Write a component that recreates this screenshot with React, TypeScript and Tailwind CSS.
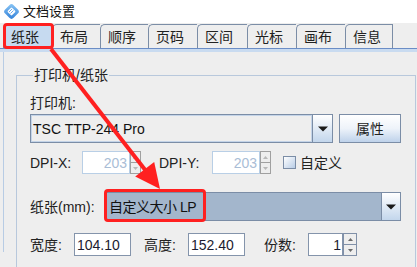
import React from "react";

const tabs: [string, number][] = [
  ["纸张", 49],
  ["布局", 48],
  ["顺序", 48],
  ["页码", 49],
  ["区间", 50],
  ["光标", 49],
  ["画布", 49],
  ["信息", 48],
];

function DownArrow() {
  return (
    <svg width="10" height="6" viewBox="0 0 10 6">
      <path d="M0 0.5 H10 L5 5.5 Z" fill="#1a1a1a" />
    </svg>
  );
}

function SpinButtons({ w, active }: { w: number; active?: boolean }) {
  const border = active ? "border-[#8090a8]" : "border-[#a0a0a0]";
  const arrow = active ? "#6a6a6a" : "#b8b8b8";
  return (
    <div className={`flex flex-col h-full border ${border} bg-[#eeeeee]`} style={{ width: w }}>
      <div className={`flex-1 flex items-center justify-center border-b ${border}`}>
        <svg width="5" height="3" viewBox="0 0 5 3">
          <path d="M0 3 L2.5 0 L5 3 Z" fill={arrow} />
        </svg>
      </div>
      <div className="flex-1 flex items-center justify-center">
        <svg width="5" height="3" viewBox="0 0 5 3">
          <path d="M0 0 L2.5 3 L5 0 Z" fill={arrow} />
        </svg>
      </div>
    </div>
  );
}

function DisabledSpinner() {
  return (
    <div className="flex h-[23px] w-[59px]">
      <div className="w-[48px] h-full bg-white border border-[#b9cfe6] flex items-center justify-end pr-[2px] text-[14px] text-[#a9bdd6]">
        203
      </div>
      <SpinButtons w={11} />
    </div>
  );
}

function TextField({ value, w }: { value: string; w: number }) {
  return (
    <div
      className="h-[23px] bg-white border border-[#8494ab] flex items-center pl-[2px] text-[14px] text-[#1c1c30]"
      style={{ width: w }}
    >
      {value}
    </div>
  );
}

export default function App() {
  return (
    <div className="relative w-[417px] h-[267px] overflow-hidden bg-[#eeeeee] text-[#222222] font-['Liberation_Sans','Noto_Sans_CJK_SC',sans-serif] leading-[16px]">
      {/* Title bar */}
      <div className="h-[23px] bg-white flex items-center pl-[3px]">
        <svg width="17" height="17" viewBox="0 0 17 17">
          <defs>
            <linearGradient id="ig" x1="0" y1="0" x2="1" y2="1">
              <stop offset="0" stopColor="#8ec8f6" />
              <stop offset="1" stopColor="#2f7fd8" />
            </linearGradient>
          </defs>
          <rect x="2.5" y="2.5" width="12" height="12" rx="3" transform="rotate(45 8.5 8.5)" fill="url(#ig)" />
          <rect x="5.5" y="5.5" width="6" height="6" rx="1" transform="rotate(45 8.5 8.5)" fill="#ffffff" />
          <path d="M6 9 L9 6 M7.5 10.5 L10.5 7.5" stroke="#5aa0e8" strokeWidth="0.9" />
        </svg>
        <span className="ml-[3px] text-[13px] text-[#111111]">文档设置</span>
      </div>

      {/* Tabs */}
      <div className="h-[25px] flex items-end pl-[3px]">
        {tabs.map(([t, w], i) => (
          <div
            key={t}
            className={`h-[24px] flex items-center pl-[7px] text-[14px] border-t border-l border-[#7b8da6] rounded-tl-[5px] ${
              i === 0 ? "bg-[#c6daf0]" : "bg-[#eeeeee]"
            } ${i === tabs.length - 1 ? "border-r" : ""}`}
            style={{ width: w }}
          >
            {t}
          </div>
        ))}
      </div>
      <div className="h-px bg-[#6b8dc6]" />
      <div className="h-[3px] bg-[#c9dbf0]" />

      {/* Content */}
      <div className="ml-[3px] h-[200px] border-l border-[#b8cce4] pl-[12px] pt-[15px]">
        <fieldset className="w-[400px] h-[240px] border border-[#b8c8dc] pl-[13px]">
          <legend className="ml-[3px] px-[1px] text-[14px] leading-[16px]">打印机/纸张</legend>

          <div className="mt-[12px] text-[14px]">打印机:</div>

          {/* printer combo */}
          <div className="mt-[3px] flex h-[29px]">
            <div className="w-[283px] h-full border border-[#7b8da6] bg-[#eeeeee] shadow-[inset_0_0_0_1px_#c4d4e8] flex items-center pl-[2px] text-[14px] text-[#111111]">
              TSC TTP-244 Pro
            </div>
            <div className="w-[20px] h-full border-y border-r border-[#7b8da6] bg-gradient-to-b from-white to-[#c3d6ec] flex items-center justify-center">
              <DownArrow />
            </div>
            <div className="ml-[6px] w-[62px] h-full border border-[#7b8da6] bg-gradient-to-b from-white via-[#eef3fa] to-[#bed2ea] flex items-center justify-center text-[14px]">
              属性
            </div>
          </div>

          {/* DPI row */}
          <div className="mt-[8px] flex items-center h-[23px] text-[14px]">
            <span className="w-[52px]">DPI-X:</span>
            <DisabledSpinner />
            <span className="ml-[18px] w-[53px]">DPI-Y:</span>
            <DisabledSpinner />
            <div className="ml-[12px] w-[13px] h-[13px] border border-[#7b8da6] bg-gradient-to-br from-white to-[#b9cde6]" />
            <span className="ml-[4px]">自定义</span>
          </div>

          {/* paper row */}
          <div className="mt-[18px] flex items-center h-[29px] text-[14px]">
            <span className="w-[75px]">纸张(mm):</span>
            <div className="w-[277px] h-full border border-[#7b8da6] bg-[#a3b6cc] flex items-center pl-[3px] text-[14px] text-[#111111] tracking-[-0.5px]">
              自定义大小 LP
            </div>
            <div className="w-[19px] h-full border-y border-r border-[#7b8da6] bg-gradient-to-b from-white to-[#c3d6ec] flex items-center justify-center">
              <DownArrow />
            </div>
          </div>

          {/* size row */}
          <div className="mt-[12px] flex items-center h-[23px] text-[14px]">
            <span className="w-[44px]">宽度:</span>
            <TextField value="104.10" w={57} />
            <span className="ml-[13px] w-[44px]">高度:</span>
            <TextField value="152.40" w={57} />
            <span className="ml-[19px] w-[44px]">份数:</span>
            <div className="flex h-[23px]">
              <div className="w-[35px] h-full bg-white border border-[#8494ab] flex items-center justify-end pr-[1px] text-[14px] text-[#1c1c30]">
                1
              </div>
              <SpinButtons w={14} active />
            </div>
          </div>
        </fieldset>
      </div>

      {/* Annotations */}
      <div className="absolute left-[3px] top-[23px] w-[51px] h-[26px] border-[3px] border-[#ff2020] rounded-[4px]" />
      <div className="absolute left-[104px] top-[189px] w-[102px] h-[33px] border-[3px] border-[#ff2020] rounded-[4px]" />
      <svg className="absolute left-0 top-0" width="417" height="267" viewBox="0 0 417 267">
        <line x1="51" y1="49" x2="146" y2="171" stroke="#ff2020" strokeWidth="4" />
        <path d="M160 189 L154.2 161.9 L135.2 176.5 Z" fill="#ff2020" />
      </svg>
    </div>
  );
}
